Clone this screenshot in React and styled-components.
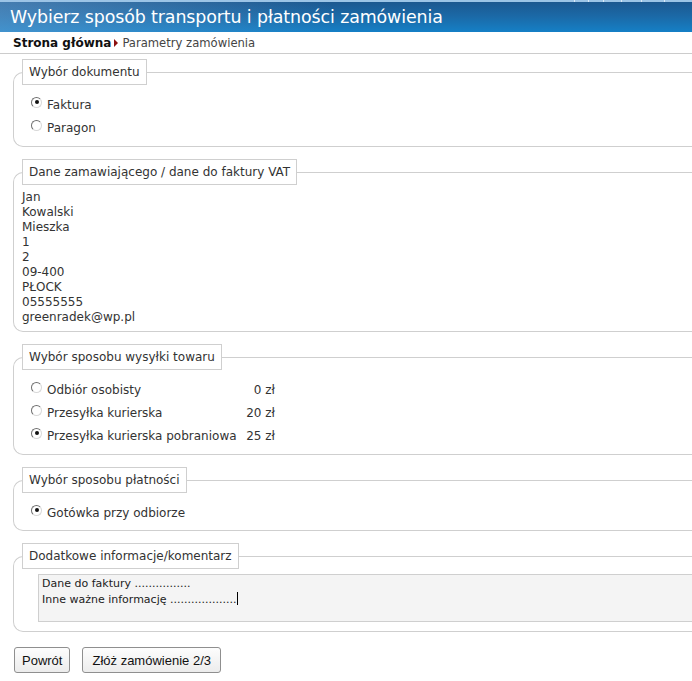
import React from 'react';
import styled, { createGlobalStyle } from 'styled-components';

const GlobalStyle = createGlobalStyle`
  html, body {
    margin: 0;
    padding: 0;
    background: #fff;
    overflow: hidden;
  }
  body {
    font-family: "DejaVu Sans", "Open Sans", sans-serif;
    color: #333;
  }
`;

const Page = styled.div`
  width: 740px;
`;

const TopStrip = styled.div`
  height: 2px;
  background: #9cc4e6;
  display: flex;
  justify-content: flex-end;
  padding-right: 51px;
`;

const Tick = styled.span`
  width: ${p => p.$w}px;
  border-left: 1px solid #dceaf6;
`;

const TitleBar = styled.div`
  height: 30px;
  display: flex;
  align-items: center;
  padding-left: 10px;
  background:
    linear-gradient(90deg, rgba(120, 170, 215, 0.45) 0%, rgba(120, 170, 215, 0) 45%),
    linear-gradient(180deg, #1c5890 0%, #1b6aa8 50%, #1580c6 100%);
`;

const Title = styled.h1`
  margin: 0;
  font-size: 17.4px;
  font-weight: normal;
  color: #fff;
  letter-spacing: -0.1px;
`;

const Breadcrumb = styled.div`
  height: 20px;
  display: flex;
  align-items: center;
  padding: 1px 0 0 13px;
  border-bottom: 1px solid #ccc;
`;

const Crumb = styled.span`
  font-size: ${p => (p.$bold ? 12 : 11.6)}px;
  font-weight: ${p => (p.$bold ? 'bold' : 'normal')};
  color: ${p => (p.$bold ? '#111' : '#444')};
`;

const Arrow = styled.span`
  width: 0;
  height: 0;
  margin: 0 4px 0 3px;
  border-top: 4px solid transparent;
  border-bottom: 4px solid transparent;
  border-left: 4px solid #8b1010;
`;

const Content = styled.div`
  padding: 5px 0 0 13px;
`;

const Fieldset = styled.fieldset`
  margin: 0 0 12px 0;
  padding: 0 0 ${p => p.$pb}px 8px;
  border: 1px solid #cfcfcf;
  border-right: none;
  border-radius: 10px 0 0 10px;
  min-width: 0;
`;

const Legend = styled.legend`
  padding: 5px 6px;
  border: 1px solid #cfcfcf;
  font-size: 12px;
  line-height: 14px;
  color: #333;
`;

const Options = styled.div`
  padding: ${p => p.$pt}px 0 0 9px;
  display: flex;
  flex-direction: column;
`;

const OptionRow = styled.label`
  height: 23px;
  display: flex;
  align-items: center;
  font-size: 12px;
  color: #333;
`;

const Radio = styled.span`
  position: relative;
  box-sizing: border-box;
  width: 11px;
  height: 11px;
  margin: -5px 5px 0 0;
  border-radius: 50%;
  border: 1px solid;
  border-color: #6f6f6f #d8d8d8 #d8d8d8 #6f6f6f;
  background: #fff;

  &::after {
    content: '';
    display: ${p => (p.$checked ? 'block' : 'none')};
    position: absolute;
    left: 2.5px;
    top: 2.5px;
    width: 4px;
    height: 4px;
    border-radius: 50%;
    background: #111;
  }
`;

const OptionLabel = styled.span`
  width: ${p => (p.$wide ? '190px' : 'auto')};
`;

const Price = styled.span`
  width: 38px;
  text-align: right;
`;

const DataBlock = styled.div`
  padding-top: 5px;
  font-size: 12px;
  line-height: 15px;
  color: #333;
`;

const Notes = styled.div`
  margin: 5px 0 0 16px;
  height: 44px;
  padding: 1px 3px;
  border: 1px solid #cfcfcf;
  border-right: none;
  background: #f4f4f4;
  font-size: 11px;
  line-height: 16px;
  color: #222;
`;

const Caret = styled.span`
  display: inline-block;
  width: 1px;
  height: 13px;
  margin-left: 1px;
  vertical-align: -2px;
  background: #000;
`;

const Buttons = styled.div`
  display: flex;
  gap: 12px;
  padding: 3px 0 0 1px;
`;

const Button = styled.button`
  height: 26px;
  padding: 0 ${p => p.$px}px;
  border: 1px solid #8f8f8f;
  border-radius: 3px;
  background: linear-gradient(#fdfdfd, #ececec);
  font-family: "Liberation Sans", Arial, sans-serif;
  font-size: 13px;
  color: #111;
`;

const ticks = [13, 14, 17, 19, 22, 24];

const shipping = [
  { label: 'Odbiór osobisty', price: '0 zł' },
  { label: 'Przesyłka kurierska', price: '20 zł' },
  { label: 'Przesyłka kurierska pobraniowa', price: '25 zł', checked: true },
];

const customer = ['Jan', 'Kowalski', 'Mieszka', '1', '2', '09-400', 'PŁOCK', '05555555', 'greenradek@wp.pl'];

const App = () => {
  return (
    <Page>
      <GlobalStyle />
      <TopStrip>
        {ticks.map((w, i) => <Tick key={i} $w={w} />)}
      </TopStrip>
      <TitleBar>
        <Title>Wybierz sposób transportu i płatności zamówienia</Title>
      </TitleBar>
      <Breadcrumb>
        <Crumb $bold>Strona główna</Crumb>
        <Arrow />
        <Crumb>Parametry zamówienia</Crumb>
      </Breadcrumb>

      <Content>
        <Fieldset $pb={7}>
          <Legend>Wybór dokumentu</Legend>
          <Options $pt={8}>
            <OptionRow><Radio $checked />Faktura</OptionRow>
            <OptionRow><Radio />Paragon</OptionRow>
          </Options>
        </Fieldset>

        <Fieldset $pb={6}>
          <Legend>Dane zamawiającego / dane do faktury VAT</Legend>
          <DataBlock>
            {customer.map((line, i) => <div key={i}>{line}</div>)}
          </DataBlock>
        </Fieldset>

        <Fieldset $pb={7}>
          <Legend>Wybór sposobu wysyłki towaru</Legend>
          <Options $pt={8}>
            {shipping.map(s => (
              <OptionRow key={s.label}>
                <Radio $checked={s.checked} />
                <OptionLabel $wide>{s.label}</OptionLabel>
                <Price>{s.price}</Price>
              </OptionRow>
            ))}
          </Options>
        </Fieldset>

        <Fieldset $pb={6}>
          <Legend>Wybór sposobu płatności</Legend>
          <Options $pt={8}>
            <OptionRow><Radio $checked />Gotówka przy odbiorze</OptionRow>
          </Options>
        </Fieldset>

        <Fieldset $pb={9}>
          <Legend>Dodatkowe informacje/komentarz</Legend>
          <Notes>
            <div>Dane do faktury ................</div>
            <div>Inne ważne informację ...................<Caret /></div>
          </Notes>
        </Fieldset>

        <Buttons>
          <Button $px={7}>Powrót</Button>
          <Button $px={9}>Złóż zamówienie 2/3</Button>
        </Buttons>
      </Content>
    </Page>
  );
};

export default App;
